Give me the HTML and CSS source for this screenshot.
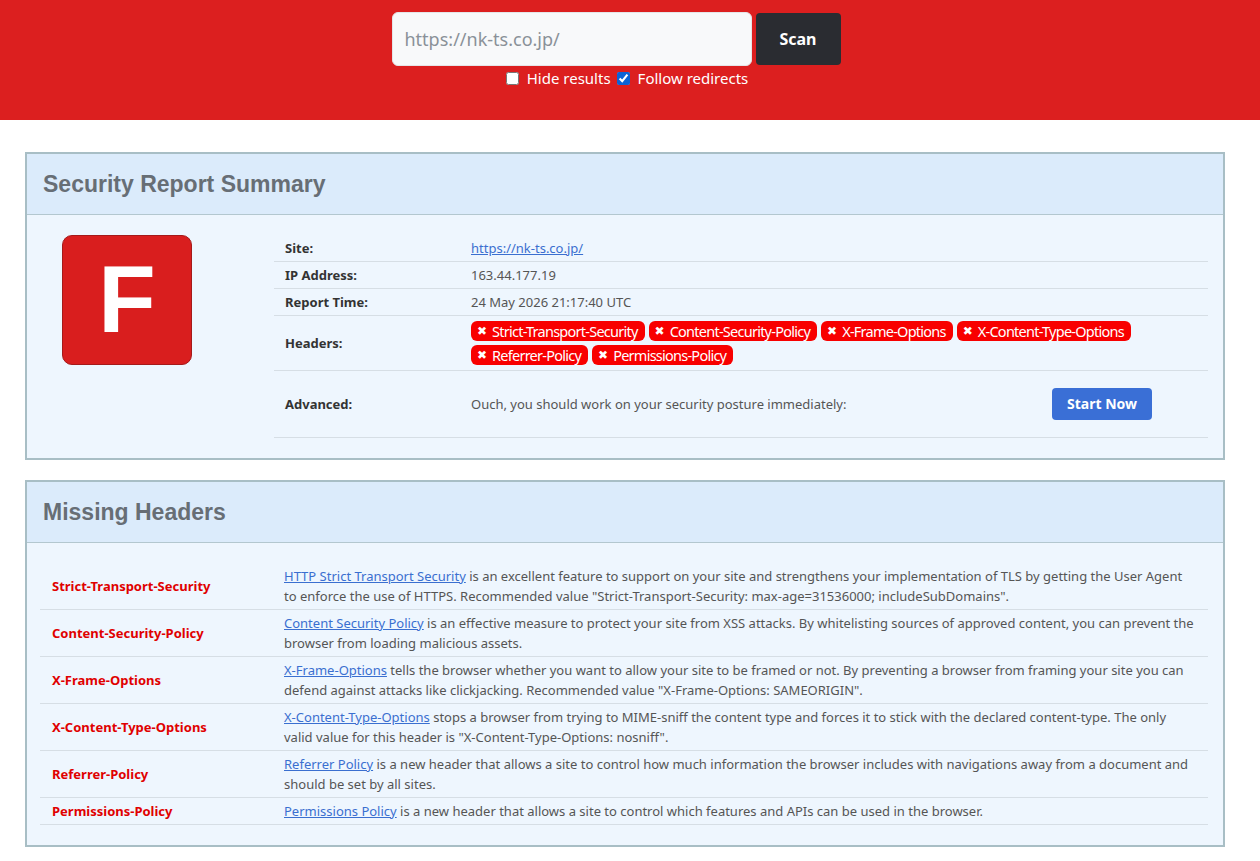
FILE: index.html
```html
<!DOCTYPE html>
<html lang="en">

<head>
  <meta charset="UTF-8">
  <meta name="viewport" content="width=device-width, initial-scale=1.0">
  <title>Security Headers</title>
  <link rel="stylesheet" href="styles.css">
</head>

<body>
  <div class="banner">
    <form class="scan-form">
      <div class="scan-row">
        <input type="text" class="scan-input" placeholder="https://nk-ts.co.jp/">
        <button type="button" class="scan-btn">Scan</button>
      </div>
      <div class="scan-options">
        <label><input type="checkbox"> Hide results</label>
        <label><input type="checkbox" checked> Follow redirects</label>
      </div>
    </form>
  </div>

  <div class="page">
    <div class="card">
      <div class="card-head">Security Report Summary</div>
      <div class="card-body summary">
        <div class="grade">F</div>
        <table class="report">
          <tr>
            <th>Site:</th>
            <td><a href="#">https://nk-ts.co.jp/</a></td>
          </tr>
          <tr>
            <th>IP Address:</th>
            <td>163.44.177.19</td>
          </tr>
          <tr>
            <th>Report Time:</th>
            <td>24 May 2026 21:17:40 UTC</td>
          </tr>
          <tr>
            <th>Headers:</th>
            <td>
              <div class="badges">
                <span class="badge">Strict-Transport-Security</span>
                <span class="badge">Content-Security-Policy</span>
                <span class="badge">X-Frame-Options</span>
                <span class="badge">X-Content-Type-Options</span>
                <span class="badge">Referrer-Policy</span>
                <span class="badge">Permissions-Policy</span>
              </div>
            </td>
          </tr>
          <tr class="advanced">
            <th>Advanced:</th>
            <td>
              <div class="advanced-row">
                <span>Ouch, you should work on your security posture immediately:</span>
                <a href="#" class="start-btn">Start Now</a>
              </div>
            </td>
          </tr>
        </table>
      </div>
    </div>

    <div class="card">
      <div class="card-head">Missing Headers</div>
      <div class="card-body">
        <table class="missing">
          <tr>
            <th>Strict-Transport-Security</th>
            <td><a href="#">HTTP Strict Transport Security</a> is an excellent feature to support on your site and strengthens your implementation of TLS by getting the User Agent to enforce the use of HTTPS. Recommended value "Strict-Transport-Security: max-age=31536000; includeSubDomains".</td>
          </tr>
          <tr>
            <th>Content-Security-Policy</th>
            <td><a href="#">Content Security Policy</a> is an effective measure to protect your site from XSS attacks. By whitelisting sources of approved content, you can prevent the browser from loading malicious assets.</td>
          </tr>
          <tr>
            <th>X-Frame-Options</th>
            <td><a href="#">X-Frame-Options</a> tells the browser whether you want to allow your site to be framed or not. By preventing a browser from framing your site you can defend against attacks like clickjacking. Recommended value "X-Frame-Options: SAMEORIGIN".</td>
          </tr>
          <tr>
            <th>X-Content-Type-Options</th>
            <td><a href="#">X-Content-Type-Options</a> stops a browser from trying to MIME-sniff the content type and forces it to stick with the declared content-type. The only valid value for this header is "X-Content-Type-Options: nosniff".</td>
          </tr>
          <tr>
            <th>Referrer-Policy</th>
            <td><a href="#">Referrer Policy</a> is a new header that allows a site to control how much information the browser includes with navigations away from a document and should be set by all sites.</td>
          </tr>
          <tr>
            <th>Permissions-Policy</th>
            <td><a href="#">Permissions Policy</a> is a new header that allows a site to control which features and APIs can be used in the browser.</td>
          </tr>
        </table>
      </div>
    </div>
  </div>
</body>

</html>
```

FILE: styles.css
```css
body {
  font-family: "Noto Sans", sans-serif;
  font-size: 13px;
  color: #555;
  margin: 0;
  padding: 0;
  background-color: #fff;
}

a {
  color: #3a6fd0;
}

.banner {
  background-color: #dc1f1f;
  height: 120px;
  box-sizing: border-box;
  padding-top: 12px;
}

.scan-form {
  width: 449px;
  margin: 0 auto;
  position: relative;
  left: -14px;
}

.scan-row {
  display: flex;
  gap: 4px;
}

.scan-input {
  width: 360px;
  height: 54px;
  box-sizing: border-box;
  border: 1px solid #e4e6e8;
  border-radius: 6px;
  background: #f8f9fa;
  padding: 0 12px;
  font-family: "Noto Sans", sans-serif;
  font-size: 18px;
  color: #333;
}

.scan-input::placeholder {
  color: #8a9198;
}

.scan-btn {
  width: 85px;
  height: 52px;
  margin-top: 1px;
  border: none;
  border-radius: 4px;
  background: #2a2c31;
  color: #fff;
  font-family: "Noto Sans", sans-serif;
  font-weight: bold;
  font-size: 16px;
  cursor: pointer;
}

.scan-options {
  display: flex;
  justify-content: center;
  gap: 6px;
  margin-top: 2px;
  padding-left: 22px;
  color: #fff;
  font-size: 15px;
}

.scan-options label {
  display: flex;
  align-items: center;
  gap: 4px;
}

.scan-options input {
  width: 13px;
  height: 13px;
  margin: 0 4px 0 0;
  accent-color: #0b62d6;
}

.page {
  padding: 32px 35px 0 25px;
}

.card {
  border: 2px solid #a8bec5;
  margin-bottom: 20px;
  background: #eef6fe;
}

.card-head {
  background: #dbebfb;
  border-bottom: 1px solid #b3c7cf;
  height: 60px;
  line-height: 60px;
  padding-left: 16px;
  font-family: "Liberation Sans", Arial, sans-serif;
  font-weight: bold;
  font-size: 23px;
  color: #676e75;
}

.card-body {
  padding: 20px 15px 20px 13px;
}

.summary {
  display: flex;
  padding-bottom: 20px;
}

.grade {
  width: 128px;
  height: 128px;
  margin: 0 82px 0 22px;
  flex-shrink: 0;
  background: #d91e1e;
  border: 1px solid #a51a1a;
  border-radius: 10px;
  color: #fff;
  font-family: "Liberation Sans", Arial, sans-serif;
  font-weight: bold;
  font-size: 94px;
  line-height: 128px;
  text-align: center;
}

table {
  border-collapse: collapse;
  width: 100%;
}

th {
  text-align: left;
  font-weight: bold;
  color: #333;
}

.report th,
.report td {
  border-bottom: 1px solid #d6dee5;
  padding: 3px 11px;
  line-height: 20px;
  vertical-align: middle;
}

.report th {
  width: 164px;
}

.badges {
  display: flex;
  flex-wrap: wrap;
  gap: 4px;
  padding: 2px 0 2px;
  margin-right: 60px;
}

.badge {
  display: flex;
  align-items: center;
  height: 20px;
  background: #f80000;
  color: #fff;
  border-radius: 6px;
  padding: 0 7px 0 6px;
  font-size: 14.5px;
  letter-spacing: -0.75px;
}

.badge::before {
  content: "\2716";
  font-family: "DejaVu Sans", sans-serif;
  font-size: 12px;
  line-height: 1;
  margin-right: 5px;
  letter-spacing: 0;
}

.advanced th,
.advanced td {
  height: 60px;
}

.advanced-row {
  display: flex;
  align-items: center;
  justify-content: space-between;
  padding-right: 45px;
}

.start-btn {
  display: inline-block;
  background: #3a6fd6;
  color: #fff;
  border-radius: 4px;
  padding: 0 15px;
  line-height: 32px;
  font-weight: bold;
  font-size: 14px;
  text-decoration: none;
}

.missing th,
.missing td {
  border-bottom: 1px solid #d6dee5;
  padding: 3px 12px;
  line-height: 20px;
  vertical-align: middle;
}

.missing th {
  width: 210px;
  color: #e00000;
}

.missing td {
  padding-left: 10px;
}
```
